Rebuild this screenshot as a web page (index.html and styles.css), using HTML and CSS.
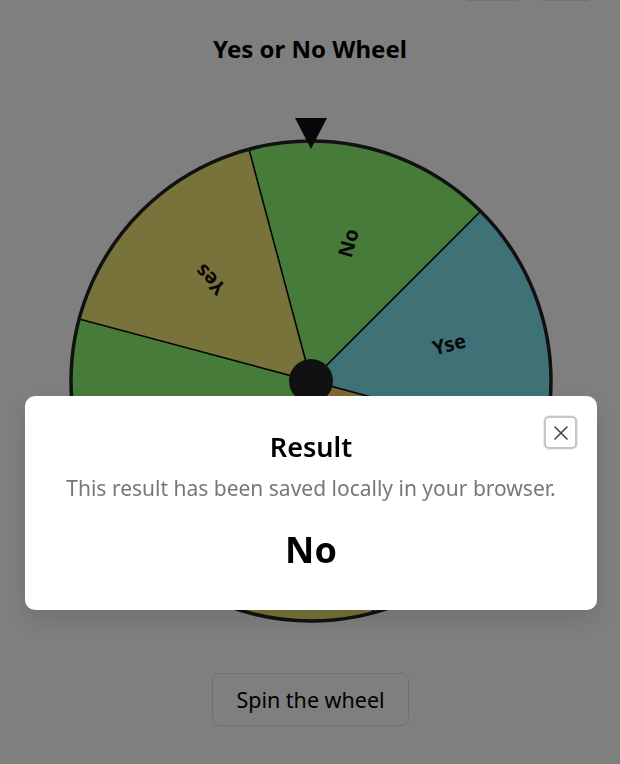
FILE: index.html
```html
<!DOCTYPE html>
<html lang="en">
<head>
<meta charset="utf-8">
<title>Yes or No Wheel</title>
<link rel="stylesheet" href="styles.css">
</head>
<body>
<div class="page">
  <div class="topbar">
    <button class="tool-btn tool-btn-a" type="button" aria-label="Share"></button>
    <button class="tool-btn tool-btn-b" type="button" aria-label="Menu"></button>
  </div>
  <h1 class="title">Yes or No Wheel</h1>
  <div class="wheel-wrap">
    <svg class="wheel" width="500" height="520" viewBox="0 0 500 520" xmlns="http://www.w3.org/2000/svg">
      <g class="segments" stroke="#111" stroke-width="1.5">
        <path d="M250 270 L187.88 38.18 A240 240 0 0 1 419.71 100.29 Z" fill="#8ef672"/>
        <path d="M250 270 L419.71 100.29 A240 240 0 0 1 481.82 332.12 Z" fill="#7ee4ee"/>
        <path d="M250 270 L481.82 332.12 A240 240 0 0 1 312.12 501.82 Z" fill="#f7d267"/>
        <path d="M250 270 L312.12 501.82 A240 240 0 0 1 80.29 439.71 Z" fill="#eee674"/>
        <path d="M250 270 L80.29 439.71 A240 240 0 0 1 18.18 207.88 Z" fill="#8ef672"/>
        <path d="M250 270 L18.18 207.88 A240 240 0 0 1 187.88 38.18 Z" fill="#eee674"/>
      </g>
      <circle cx="250" cy="270" r="240" fill="none" stroke="#222" stroke-width="3.5"/>
      <g class="labels">
        <text x="287.01" y="131.87" transform="rotate(-75 287.01 131.87)">No</text>
        <text x="388.13" y="232.99" transform="rotate(-15 388.13 232.99)">Yse</text>
        <text x="351.12" y="371.12" transform="rotate(45 351.12 371.12)">Ye</text>
        <text x="212.99" y="408.13" transform="rotate(105 212.99 408.13)">Yes</text>
        <text x="111.87" y="307.01" transform="rotate(165 111.87 307.01)">No</text>
        <text x="148.88" y="168.88" transform="rotate(-135 148.88 168.88)">Yes</text>
      </g>
      <circle cx="250" cy="270" r="22" fill="#222"/>
      <polygon points="234,7 266,7 250,38" fill="#111"/>
    </svg>
  </div>
  <div class="actions">
    <button class="spin-btn" type="button">Spin the wheel</button>
  </div>
</div>

<div class="overlay"></div>
<div class="modal" role="dialog" aria-labelledby="result-title">
  <button class="close-btn" type="button" aria-label="Close">
    <svg width="16" height="16" viewBox="0 0 16 16" xmlns="http://www.w3.org/2000/svg">
      <path d="M2 2 L14 14 M14 2 L2 14" stroke="#444" stroke-width="1.6" stroke-linecap="round" fill="none"/>
    </svg>
  </button>
  <h2 id="result-title" class="modal-title">Result</h2>
  <p class="modal-note">This result has been saved locally in your browser.</p>
  <p class="modal-result">No</p>
</div>
</body>
</html>
```

FILE: styles.css
```css
* { box-sizing: border-box; }

html, body {
  margin: 0;
  padding: 0;
  background: #ffffff;
  font-family: "Noto Sans", "Open Sans", "Liberation Sans", sans-serif;
  color: #000;
}

.page {
  display: flex;
  flex-direction: column;
  align-items: center;
  width: 620px;
  min-height: 764px;
}

.topbar {
  display: flex;
  justify-content: flex-end;
  gap: 16px;
  width: 100%;
  height: 40px;
  margin-top: -39px;
  padding-right: 27px;
}

.tool-btn {
  height: 40px;
  border: 1px solid #e4e4e4;
  border-radius: 6px;
  background: #fff;
}
.tool-btn-a { width: 59px; }
.tool-btn-b { width: 55px; }

.title {
  margin: 32px 0 0;
  font-size: 24px;
  line-height: 32px;
  font-weight: 700;
  color: #000;
}

.wheel-wrap {
  margin-top: 46px;
  display: flex;
  justify-content: center;
  width: 100%;
  padding-left: 2px;
}

.wheel { display: block; }

.labels text {
  font-family: "Noto Sans", "Open Sans", sans-serif;
  font-size: 20px;
  font-weight: 700;
  fill: #111;
  text-anchor: middle;
  dominant-baseline: central;
}

.actions {
  margin-top: 42px;
  display: flex;
  justify-content: center;
  width: 100%;
  padding-left: 1px;
}

.spin-btn {
  width: 197px;
  height: 53px;
  border: 1px solid #e2e2e2;
  border-radius: 7px;
  background: #ffffff;
  font-family: "Noto Sans", "Open Sans", sans-serif;
  font-size: 21.5px;
  color: #000;
  cursor: pointer;
  padding: 0;
}

.overlay {
  position: fixed;
  inset: 0;
  background: rgba(0, 0, 0, 0.5);
}

.modal {
  position: fixed;
  left: 25px;
  top: 396px;
  width: 572px;
  height: 214px;
  background: #ffffff;
  border-radius: 10px;
  box-shadow: 0 10px 24px rgba(0, 0, 0, 0.12);
  display: flex;
  flex-direction: column;
  align-items: center;
  padding: 33px 20px 0;
}

.close-btn {
  position: absolute;
  top: 19px;
  right: 19px;
  width: 35px;
  height: 35px;
  padding: 0;
  display: flex;
  align-items: center;
  justify-content: center;
  background: #fff;
  border: 1px solid #ececec;
  border-radius: 6px;
  outline: 2.5px solid #c6c6c6;
  outline-offset: -3.5px;
  cursor: pointer;
}

.modal-title {
  margin: 0;
  font-size: 27px;
  line-height: 36px;
  font-weight: 600;
  color: #000;
}

.modal-note {
  margin: 9px 0 0;
  font-size: 21px;
  line-height: 28px;
  color: #777;
  white-space: nowrap;
}

.modal-result {
  margin: 24px 0 0;
  font-size: 36px;
  line-height: 48px;
  font-weight: 700;
  color: #000;
}
```
